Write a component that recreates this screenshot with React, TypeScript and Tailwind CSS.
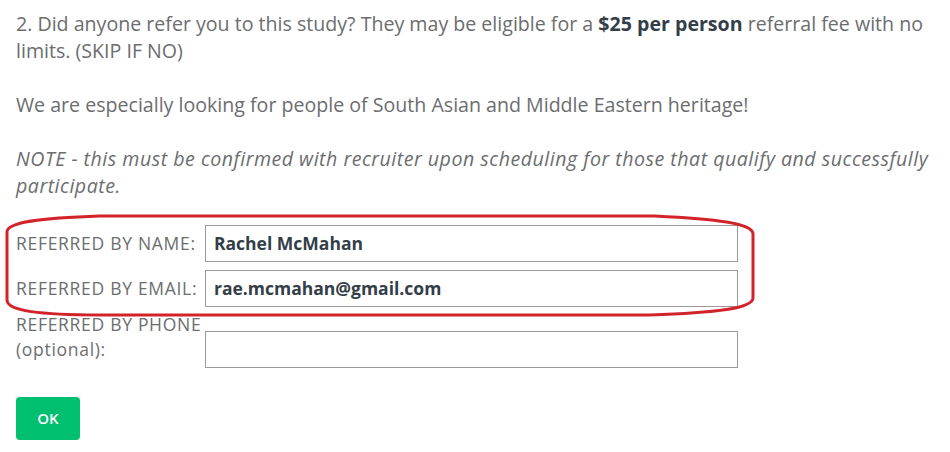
const fields = [
  { label: 'REFERRED BY NAME:', value: 'Rachel McMahan' },
  { label: 'REFERRED BY EMAIL:', value: 'rae.mcmahan@gmail.com' },
];

const App = () => {
  return (
    <div className="relative w-[950px] h-[452px] bg-white text-[#6b6d6f] font-['Open_Sans',sans-serif]">
      <div className="pl-4 pr-[4px] pt-[10px]">
        <p className="text-[19.6px] leading-[27px]">
          2. Did anyone refer you to this study? They may be eligible for a{' '}
          <strong className="font-bold text-[#333e48]">$25 per person</strong> referral fee with no limits. (SKIP IF NO)
        </p>
        <p className="text-[19.6px] leading-[27px] mt-[27px]">
          We are especially looking for people of South Asian and Middle Eastern heritage!
        </p>
        <p className="text-[19.6px] leading-[27px] mt-[27px] italic tracking-[0.5px]">
          NOTE - this must be confirmed with recruiter upon scheduling for those that qualify and successfully participate.
        </p>

        <div className="mt-[26px] flex flex-col gap-2">
          {fields.map((f) => (
            <div key={f.label} className="flex items-center">
              <span className="w-[189px] text-[17.5px] whitespace-nowrap tracking-[0.7px]">{f.label}</span>
              <div className="w-[533px] h-[37px] border border-[#9a9a9a] flex items-center px-2 text-[17.5px] font-bold text-[#333e48]">
                {f.value}
              </div>
            </div>
          ))}
        </div>

        <div className="mt-[5px] flex items-start">
          <span className="w-[189px] text-[17.5px] leading-[25px] whitespace-nowrap tracking-[0.7px]">
            REFERRED BY PHONE
            <br />
            (optional):
          </span>
          <div className="mt-[19px] w-[533px] h-[37px] border border-[#9a9a9a]" />
        </div>

        <button className="mt-[29px] w-[64px] h-[43px] rounded-sm bg-[#00bf6f] text-white text-[15px] font-semibold">
          OK
        </button>
      </div>

      <svg className="absolute left-0 top-0 pointer-events-none" width="950" height="452">
        <path
          d="M100,216 L655,216 C715,219 753,223 753,234 L753,298 C753,309 712,313 650,315 L100,315 C40,315 7,311 7,300 L7,232 C7,222 40,218 100,216 Z"
          fill="none"
          stroke="#d2232a"
          strokeWidth="3"
        />
      </svg>
    </div>
  );
};

export default App;
